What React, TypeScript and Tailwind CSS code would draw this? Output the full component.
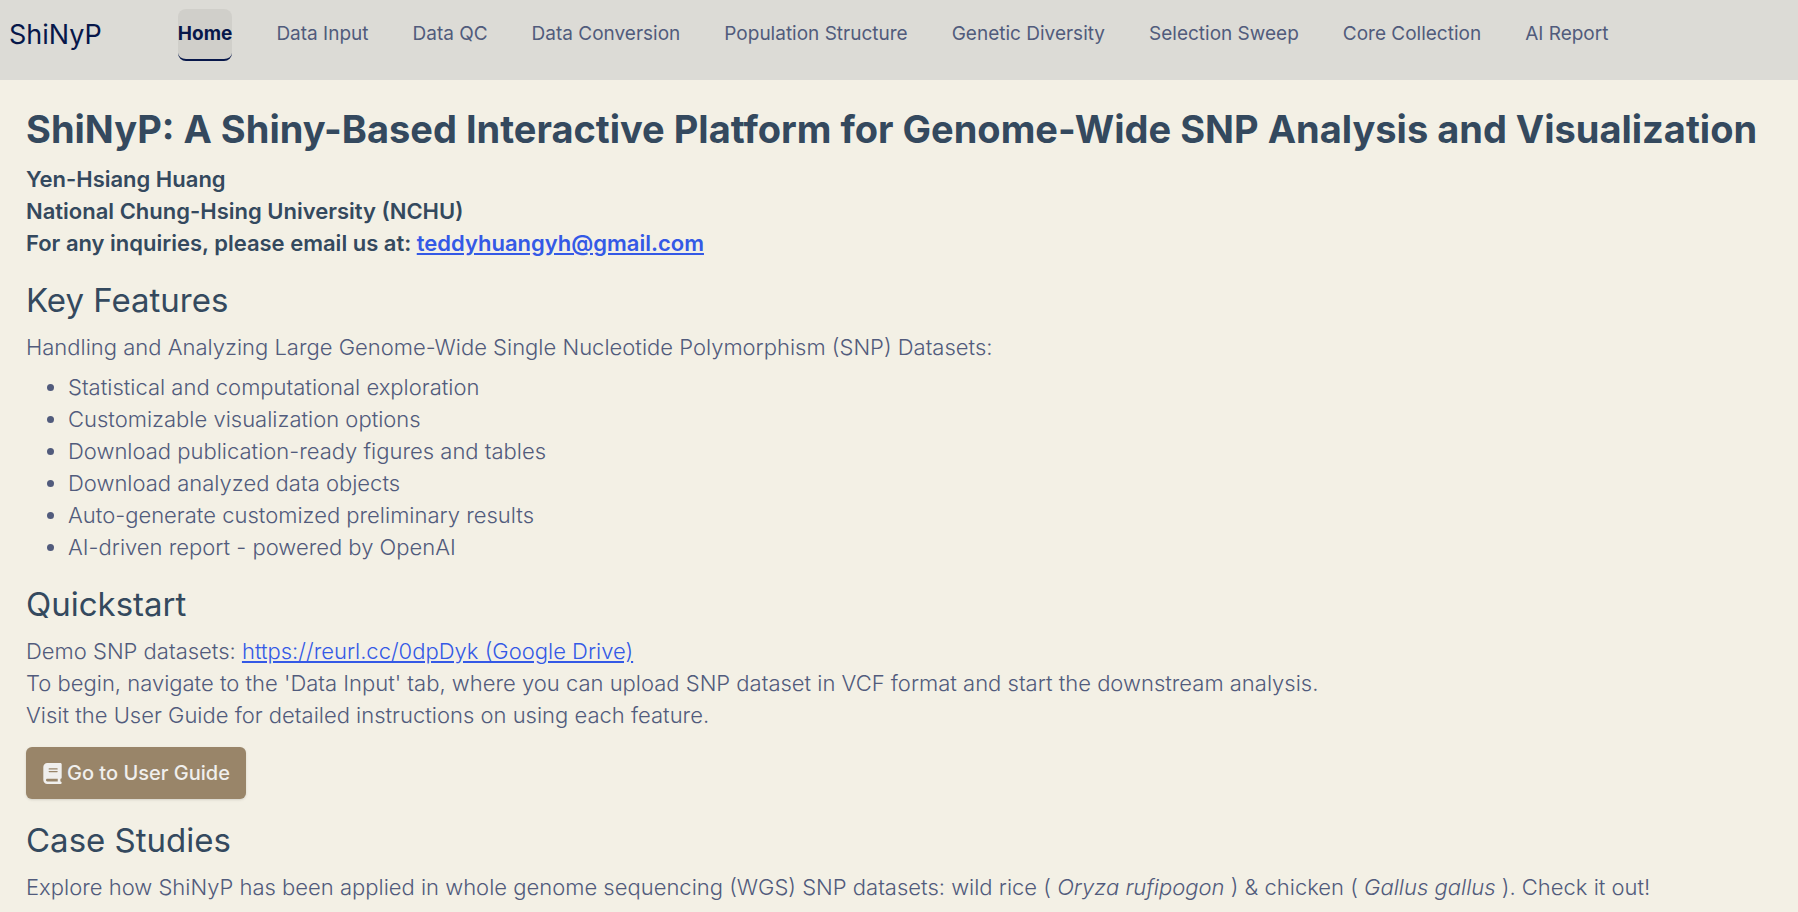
import { FaBook } from "react-icons/fa6";

const tabs = ["Data Input", "Data QC", "Data Conversion", "Population Structure", "Genetic Diversity", "Selection Sweep", "Core Collection", "AI Report"];
const features = [
  "Statistical and computational exploration",
  "Customizable visualization options",
  "Download publication-ready figures and tables",
  "Download analyzed data objects",
  "Auto-generate customized preliminary results",
  "AI-driven report - powered by OpenAI",
];

function SectionTitle({ children }: { children: string }) {
  return <h2 className="mt-[21px] mb-[11px] text-[33px] leading-[40px] font-normal text-[#34495e]">{children}</h2>;
}

export default function App() {
  return (
    <div className="min-h-screen bg-[#f3f0e5] font-['Inter',sans-serif] text-[#515b7c]">
      <header className="flex min-h-20 items-start bg-[#dcdbd6] px-[9px] pt-[9px]">
        <a href="#home" className="mr-[76px] py-1 text-[27px] leading-[44px] text-[#07174a]">ShiNyP</a>
        <nav className="flex gap-11 text-[19px] leading-[50px]">
          <a href="#home" className="rounded-lg border-b-2 border-[#07174a] bg-[#d0cfca] font-bold text-[#07174a]">Home</a>
          {tabs.map((t) => <a key={t} href="#tab">{t}</a>)}
        </nav>
      </header>
      <main className="px-[26px] pt-[25px] text-[22px] leading-[32px] font-light">
        <h1 className="text-[38px] leading-[48px] font-bold text-[#34495e]">ShiNyP: A Shiny-Based Interactive Platform for Genome-Wide SNP Analysis and Visualization</h1>
        <p className="mt-[10px] font-semibold text-[#34495e]">Yen-Hsiang Huang<br />National Chung-Hsing University (NCHU)<br />For any inquiries, please email us at: <a className="text-[#3459e6] underline" href="mailto:teddyhuangyh@gmail.com">teddyhuangyh@gmail.com</a></p>
        <SectionTitle>Key Features</SectionTitle>
        <p>Handling and Analyzing Large Genome-Wide Single Nucleotide Polymorphism (SNP) Datasets:</p>
        <ul className="mt-2 list-disc pl-[42px]">{features.map((f) => <li key={f}>{f}</li>)}</ul>
        <SectionTitle>Quickstart</SectionTitle>
        <p>Demo SNP datasets: <a className="text-[#3459e6] underline" href="https://reurl.cc/0dpDyk">https://reurl.cc/0dpDyk (Google Drive)</a><br />To begin, navigate to the 'Data Input' tab, where you can upload SNP dataset in VCF format and start the downstream analysis.<br />Visit the User Guide for detailed instructions on using each feature.</p>
        <button className="mt-4 flex h-[52px] items-center gap-1 rounded-md bg-[#998569] px-4 text-[20px] font-medium text-[#f0efed] shadow-sm"><FaBook size={21} />Go to User Guide</button>
        <SectionTitle>Case Studies</SectionTitle>
        <p>Explore how ShiNyP has been applied in whole genome sequencing (WGS) SNP datasets: wild rice ( <i>Oryza rufipogon</i> ) &amp; chicken ( <i>Gallus gallus</i> ). Check it out!</p>
      </main>
    </div>
  );
}
